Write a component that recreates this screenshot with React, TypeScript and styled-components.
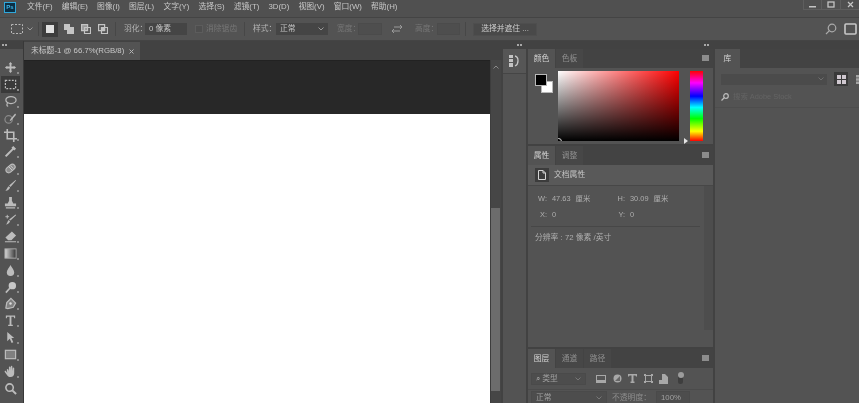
import React from "react";
import styled, { createGlobalStyle } from "styled-components";

const GlobalStyle = createGlobalStyle`
  html, body { margin: 0; padding: 0; background: #535353; }
  body { font-family: "Liberation Sans", "Noto Sans CJK SC", sans-serif; }
  * { box-sizing: border-box; }
`;

const Shell = styled.div`
  width: 859px;
  height: 403px;
  overflow: hidden;
  display: flex;
  flex-direction: column;
  background: #535353;
  color: #c4c4c4;
  font-size: 8px;
  line-height: 1;
  filter: blur(0.4px);
  white-space: nowrap;
`;

/* top menu */
const MenuBar = styled.div`
  height: 18px;
  flex: none;
  display: flex;
  background: #505050;
  border-bottom: 1px solid #444;
`;
const Logo = styled.div`
  width: 12px;
  height: 11px;
  margin: 2px 0 0 4px;
  background: #0c2f44;
  border: 1px solid #2fa8dc;
  color: #3fb6e8;
  font-size: 6px;
  font-weight: 700;
  text-align: center;
  line-height: 9px;
`;
const MenuList = styled.div`
  display: flex;
  gap: 9.2px;
  margin-left: 11px;
  padding-top: 3px;
`;
const MenuItem = styled.span`
  color: #c8c8c8;
  font-size: 7.8px;
`;
const WinControls = styled.div`
  margin-left: auto;
  display: flex;
  height: 10px;
  border-left: 1px solid #5e5e5e;
  border-bottom: 1px solid #5e5e5e;
`;
const WinBtn = styled.div<{ $w: number }>`
  width: ${(p) => p.$w}px;
  display: flex;
  align-items: center;
  justify-content: center;
  border-right: 1px solid #5e5e5e;
  &:last-child { border-right: 0; }
`;

/* options bar */
const OptionsBar = styled.div`
  height: 23px;
  flex: none;
  display: flex;
  align-items: center;
  background: #535353;
  border-bottom: 1px solid #444;
`;
const OptSep = styled.div<{ $l: number; $r: number }>`
  width: 1px;
  height: 14px;
  background: #474747;
  margin: 0 ${(p) => p.$r}px 0 ${(p) => p.$l}px;
  flex: none;
`;
const OptIcon = styled.div<{ $w?: number; $ml?: number; $active?: boolean }>`
  width: ${(p) => p.$w ?? 17}px;
  height: 15px;
  flex: none;
  margin-left: ${(p) => p.$ml ?? 0}px;
  display: flex;
  align-items: center;
  justify-content: center;
  background: ${(p) => (p.$active ? "#3c3c3c" : "transparent")};
`;
const OptLabel = styled.span<{ $dim?: boolean; $w: number; $ml?: number }>`
  width: ${(p) => p.$w}px;
  flex: none;
  margin-left: ${(p) => p.$ml ?? 0}px;
  font-size: 7.8px;
  color: ${(p) => (p.$dim ? "#767676" : "#b4b4b4")};
`;
const OptInput = styled.div<{ $w: number; $dim?: boolean }>`
  width: ${(p) => p.$w}px;
  height: 12px;
  flex: none;
  display: flex;
  align-items: center;
  justify-content: space-between;
  padding: 0 3px;
  font-size: 7.8px;
  color: #c4c4c4;
  background: ${(p) => (p.$dim ? "#4e4e4e" : "#454545")};
  border: 1px solid ${(p) => (p.$dim ? "#4b4b4b" : "#454545")};
`;
const CheckBox = styled.div`
  width: 8px;
  height: 8px;
  flex: none;
  margin: 0 3px 0 8px;
  border: 1px solid #5c5c5c;
  background: #4e4e4e;
`;
const OptButton = styled.div`
  width: 64px;
  height: 13px;
  flex: none;
  margin-left: 7px;
  display: flex;
  align-items: center;
  justify-content: center;
  background: #494949;
  color: #cfcfcf;
  font-size: 7.8px;
  border: 1px solid #4e4e4e;
`;
const OptRight = styled.div`
  margin-left: auto;
  display: flex;
  align-items: center;
  gap: 7px;
  padding-right: 2px;
`;

/* workspace */
const Workspace = styled.div`
  flex: 1;
  display: flex;
  min-height: 0;
  background: #424242;
`;
const ToolPanel = styled.div`
  width: 24px;
  flex: none;
  display: flex;
  flex-direction: column;
  background: #535353;
  border-right: 1px solid #383838;
`;
const Handle = styled.div<{ $pr?: number; $pl?: number }>`
  height: 8px;
  flex: none;
  background: #424242;
  display: flex;
  align-items: center;
  gap: 1px;
  justify-content: ${(p) => (p.$pl !== undefined ? "flex-start" : "flex-end")};
  padding: 0 ${(p) => p.$pr ?? 0}px 0 ${(p) => p.$pl ?? 0}px;
  &::before,
  &::after {
    content: "";
    width: 2px;
    height: 2px;
    background: #a8a8a8;
  }
`;
const LibHandle = styled.div`
  height: 8px;
  flex: none;
  background: #424242;
`;
const ToolList = styled.div`
  padding-top: 10px;
  display: flex;
  flex-direction: column;
`;
const ToolBtn = styled.div<{ $active?: boolean }>`
  height: 16.9px;
  margin: 0 3px 0 1px;
  display: flex;
  align-items: center;
  justify-content: center;
  position: relative;
  background: ${(p) => (p.$active ? "#3a3a3a" : "transparent")};
`;
const Corner = styled.i`
  position: absolute;
  right: 1px;
  bottom: 2px;
  width: 2px;
  height: 2px;
  background: #8c8c8c;
`;

const DocArea = styled.div`
  width: 478px;
  flex: none;
  display: flex;
  flex-direction: column;
`;
const DocTabs = styled.div`
  height: 19px;
  flex: none;
  display: flex;
  align-items: flex-end;
  background: #424242;
`;
const DocTab = styled.div`
  width: 116px;
  height: 18px;
  display: flex;
  align-items: center;
  justify-content: space-between;
  padding: 0 6px 0 7px;
  background: #535353;
  font-size: 7.8px;
  color: #c8c8c8;
`;
const DocBody = styled.div`
  flex: 1;
  display: flex;
  min-height: 0;
`;
const Canvas = styled.div`
  width: 466px;
  flex: none;
  display: flex;
  flex-direction: column;
  background: #282828;
`;
const Pasteboard = styled.div`
  height: 54px;
  flex: none;
  border-top: 1px solid #222;
`;
const Paper = styled.div`
  flex: 1;
  background: #fff;
`;
const DocScroll = styled.div`
  width: 11px;
  flex: none;
  display: flex;
  flex-direction: column;
  background: #464646;
  border-left: 1px solid #3d3d3d;
  padding-right: 1px;
`;
const ScrollArrow = styled.div`
  height: 14px;
  display: flex;
  align-items: center;
  justify-content: center;
`;
const ScrollThumb = styled.div`
  height: 183px;
  margin-top: 134px;
  background: #6c6c6c;
`;

const DockStrip = styled.div`
  width: 23px;
  flex: none;
  margin-left: 1px;
  display: flex;
  flex-direction: column;
  background: #535353;
`;
const DockIcon = styled.div`
  height: 25px;
  display: flex;
  align-items: center;
  justify-content: center;
  border-bottom: 1px solid #454545;
  background: #565656;
`;

const PanelColumn = styled.div<{ $w: number }>`
  width: ${(p) => p.$w}px;
  flex: none;
  margin-left: 2px;
  display: flex;
  flex-direction: column;
`;
const Panel = styled.div<{ $h?: number; $grow?: boolean }>`
  ${(p) => (p.$h ? `height: ${p.$h}px; flex: none; margin-bottom: 2px;` : "")}
  ${(p) => (p.$grow ? "flex: 1; min-height: 0;" : "")}
  display: flex;
  flex-direction: column;
  background: #535353;
`;
const TabBar = styled.div`
  height: 19px;
  flex: none;
  display: flex;
  align-items: stretch;
  background: #434343;
  position: relative;
`;
const Tab = styled.div<{ $active?: boolean; $w?: number }>`
  width: ${(p) => p.$w ?? 27}px;
  margin-right: 1px;
  display: flex;
  align-items: center;
  justify-content: center;
  font-size: 7.8px;
  color: ${(p) => (p.$active ? "#d4d4d4" : "#8f8f8f")};
  background: ${(p) => (p.$active ? "#535353" : "#474747")};
`;
const PanelMenu = styled.div`
  position: absolute;
  right: 4px;
  top: 6px;
  width: 7px;
  height: 6px;
  background: #8c8c8c;
`;

const ColorBody = styled.div`
  flex: 1;
  display: flex;
  padding: 3px 10px 3px 7px;
`;
const Swatches = styled.div`
  width: 23px;
  height: 24px;
  flex: none;
  position: relative;
  margin-top: 3px;
`;
const Swatch = styled.div<{ $fill: string; $x: number; $y: number }>`
  position: absolute;
  left: ${(p) => p.$x}px;
  top: ${(p) => p.$y}px;
  width: 12px;
  height: 12px;
  background: ${(p) => p.$fill};
  border: 1px solid #b8b8b8;
`;
const Picker = styled.div`
  width: 121px;
  flex: none;
  position: relative;
  overflow: hidden;
  background: linear-gradient(to top, #000, rgba(0, 0, 0, 0)),
    linear-gradient(to right, #fff, #f00);
`;
const PickerDot = styled.div`
  position: absolute;
  left: -3px;
  bottom: -4px;
  width: 7px;
  height: 7px;
  border: 1px solid #ddd;
  border-radius: 50%;
`;
const HueWrap = styled.div`
  margin-left: 11px;
  width: 13px;
  flex: none;
  position: relative;
  background: linear-gradient(
    to bottom,
    #f00 0%,
    #f0f 17%,
    #00f 36%,
    #0ff 52%,
    #0f0 68%,
    #ff0 86%,
    #f00 100%
  );
`;
const HueMark = styled.div`
  position: absolute;
  left: -6px;
  bottom: -3px;
  border-left: 4px solid #e4e4e4;
  border-top: 3px solid transparent;
  border-bottom: 3px solid transparent;
`;

const PropHeader = styled.div`
  height: 21px;
  flex: none;
  display: flex;
  align-items: center;
  gap: 5px;
  padding-left: 7px;
  background: #595959;
  border-bottom: 1px solid #474747;
  font-size: 7.8px;
  color: #c4c4c4;
`;
const DocIconBox = styled.div`
  width: 14px;
  height: 14px;
  display: flex;
  align-items: center;
  justify-content: center;
  background: #3c3c3c;
`;
const PropBody = styled.div`
  flex: 1;
  display: flex;
  min-height: 0;
`;
const PropContent = styled.div`
  flex: 1;
  display: flex;
  flex-direction: column;
  padding: 9px 4px 0 3px;
  color: #aeaeae;
  font-size: 7.4px;
`;
const PropGrid = styled.div`
  display: grid;
  grid-template-columns: 78px 1fr;
  row-gap: 9px;
  padding: 0 0 8px 6px;
  border-bottom: 1px solid #474747;
`;
const PropValue = styled.div`
  display: flex;
  gap: 5px;
  height: 7px;
  align-items: center;
`;
const PropKey = styled.span`
  width: 10px;
  text-align: right;
`;
const Resolution = styled.div`
  padding: 7px 0 0 4px;
  font-size: 7.8px;
`;
const PropScroll = styled.div`
  width: 9px;
  flex: none;
  margin-bottom: 17px;
  background: #4d4d4d;
`;

const LayerRow = styled.div`
  display: flex;
  align-items: center;
  padding-left: 3px;
  font-size: 7.8px;
  color: #8c8c8c;
`;
const FilterRow = styled(LayerRow)`
  height: 22px;
  flex: none;
  border-bottom: 1px solid #4b4b4b;
  gap: 7px;
`;
const Field = styled.div<{ $w: number; $h?: number }>`
  width: ${(p) => p.$w}px;
  height: ${(p) => p.$h ?? 12}px;
  flex: none;
  display: flex;
  align-items: center;
  gap: 3px;
  padding: 0 4px;
  background: #4d4d4d;
  border: 1px solid #4a4a4a;
  color: #a0a0a0;
  justify-content: space-between;
`;
const LayerIcons = styled.div`
  display: flex;
  align-items: center;
  gap: 6.5px;
  margin-left: 3px;
`;
const Toggle = styled.div`
  width: 5px;
  height: 10px;
  margin-left: 3px;
  border-radius: 3px;
  background: #3e3e3e;
  position: relative;
  &::before {
    content: "";
    position: absolute;
    top: -2px;
    left: 0;
    width: 6px;
    height: 6px;
    border-radius: 50%;
    background: #9c9c9c;
  }
`;
const BlendRow = styled(LayerRow)`
  height: 15px;
  flex: none;
  gap: 5px;
`;

const LibBody = styled.div`
  display: flex;
  align-items: center;
  padding: 4px 0 0 6px;
`;
const LibSelect = styled.div`
  width: 106px;
  height: 11px;
  background: #4b4b4b;
  display: flex;
  align-items: center;
  justify-content: flex-end;
  padding-right: 3px;
  flex: none;
`;
const GridBtn = styled.div<{ $dark?: boolean; $ml: number }>`
  width: 14px;
  height: 14px;
  flex: none;
  margin-left: ${(p) => p.$ml}px;
  display: flex;
  align-items: center;
  justify-content: center;
  background: ${(p) => (p.$dark ? "#3a3a3a" : "transparent")};
`;
const LibSearch = styled.div`
  display: flex;
  align-items: center;
  gap: 4px;
  height: 21px;
  margin-top: 1px;
  padding-left: 6px;
  color: #646464;
  font-size: 7.4px;
  border-bottom: 1px solid #4d4d4d;
`;

const Svg = ({ s = 14, children }: { s?: number; children: React.ReactNode }) => (
  <svg width={s} height={s} viewBox="0 0 14 14" fill="none" stroke="#bcbcbc" strokeWidth="1.300">
    {children}
  </svg>
);

const Chevron = ({ c = "#9a9a9a" }: { c?: string }) => (
  <svg width="6" height="4" viewBox="0 0 6 4" fill="none" stroke={c}>
    <path d="M.5.5 3 3 5.500.5" />
  </svg>
);

const solid = { fill: "#bcbcbc", stroke: "none" };

const tools: React.ReactNode[] = [
  <path {...solid} d="M7 1 9 3.500H8V6h2.500V5L13 7l-2.500 2V8H8v2.500h1L7 13l-2-2.500h1V8H3.500v1L1 7l2.500-2v1H6V3.500H5z" />,
  <rect x="1.500" y="2.500" width="11" height="9" strokeDasharray="2 1.500" />,
  <>
    <ellipse cx="7.500" cy="5.500" rx="5.500" ry="3.800" />
    <path d="M4 9c-1.500 1-1 3 .5 3" />
  </>,
  <>
    <circle cx="5" cy="8" r="4" stroke="#8a8a8a" />
    <path {...solid} d="M12 1.500 13 3 8 9 6 10l1-2.500z" />
  </>,
  <path d="M3.500 0v10.500H14M0 3.500h10.500V14" strokeWidth="1.700" />,
  <path {...solid} d="M10 1l3 3-2 2-.800-.800L5 10.500 2.500 13 1 11.500 3.500 9l5.300-5.200L8 3z" />,
  <>
    <rect x="1.500" y="4" width="11" height="6" rx="3" transform="rotate(-40 7 7)" fill="#8c8c8c" />
    <path d="M5 5l4 4M7 4l3 3" stroke="#ddd" strokeWidth=".8" />
  </>,
  <path {...solid} d="M12.500 1 13 1.500 7 8.500 5.500 7zM5 7.800 6.500 9.200C6 11.500 3.500 12.800 1.500 12.500 3 11.500 3.500 9 5 7.800z" />,
  <path {...solid} d="M5.500 1h3v4L10 8h3v3H1V8h3l1.500-3zM2 12h10v1.500H2z" />,
  <>
    <path {...solid} d="M12.500 1.500 13 2.500 7 8 5.500 7zM5 7.500 6.500 9c-.500 2-2.500 3.500-4.500 3.500C3.500 11.500 3.500 9 5 7.500z" />
    <path d="M1.500 4h4M3.500 2v4" strokeWidth="1" />
  </>,
  <path {...solid} d="M8.500 1.500 13 6l-5 5H4.500L1.500 8zM1 12.200h12v1H1z" />,
  <>
    <defs>
      <linearGradient id="grad" x1="0" x2="1" y1="0" y2="0">
        <stop offset="0" stopColor="#d8d8d8" />
        <stop offset="1" stopColor="#333" />
      </linearGradient>
    </defs>
    <rect x="1" y="2" width="12" height="10" fill="url(#grad)" stroke="#aaa" strokeWidth="1" />
  </>,
  <path {...solid} d="M7 1c1 2.500 4 5 4 8a4 4 0 0 1-8 0c0-3 3-5.500 4-8z" />,
  <>
    <circle cx="9" cy="5" r="4" fill="#c8c8c8" stroke="none" />
    <path d="M6.500 7.500 2 12.500" strokeWidth="1.800" />
  </>,
  <>
    <path d="M7.500 1.500 12.500 6.500 10 11 4 12.500 2 12l1-6z" fill="#808080" stroke="#bcbcbc" />
    <circle cx="7" cy="7" r="1.300" fill="#ddd" stroke="none" />
  </>,
  <path {...solid} d="M2 1.500h10v3h-1l-.500-1.500H8v8.500h1.500v1.300h-5V11.500H6V3H3.500L3 4.500H2z" />,
  <path {...solid} d="M3.500 1 11 7.500H8l2 4.500-1.800.800-2-4.500L3.500 11z" />,
  <rect x="1.500" y="2.500" width="11" height="9" fill="#808080" stroke="#bcbcbc" />,
  <path {...solid} d="M3 5c0-1 1.500-1 1.800 0l.500 2V2.500c0-1.200 1.500-1.200 1.700 0V6l.300-4.200c0-1.200 1.700-1.100 1.700 0V6.500l.500-3.200c.200-1 1.500-.800 1.500.200V9c0 2.500-1.500 4-4 4-2 0-3-.800-4-2.500L.800 7.500c-.500-1 .800-1.800 1.500-.800L3.500 8.500z" />,
  <>
    <circle cx="6" cy="6" r="4" strokeWidth="1.700" />
    <path d="M9 9l4 4" strokeWidth="2.200" />
  </>,
];

const menus = ["文件(F)", "编辑(E)", "图像(I)", "图层(L)", "文字(Y)", "选择(S)", "滤镜(T)", "3D(D)", "视图(V)", "窗口(W)", "帮助(H)"];

const App: React.FC = () => {
  return (
    <Shell>
      <GlobalStyle />
      <MenuBar>
        <Logo>Ps</Logo>
        <MenuList>
          {menus.map((m) => (
            <MenuItem key={m}>{m}</MenuItem>
          ))}
        </MenuList>
        <WinControls>
          <WinBtn $w={18}>
            <svg width="7" height="7" viewBox="0 0 7 7">
              <path d="M0 5h7v1.500H0z" fill="#c4c4c4" />
            </svg>
          </WinBtn>
          <WinBtn $w={19}>
            <svg width="8" height="7" viewBox="0 0 8 7" fill="none" stroke="#c4c4c4" strokeWidth="1.300">
              <rect x="1" y="1" width="6" height="5" />
            </svg>
          </WinBtn>
          <WinBtn $w={18}>
            <svg width="7" height="7" viewBox="0 0 7 7" stroke="#c4c4c4" strokeWidth="1.200">
              <path d="M1 1l5 5M6 1 1 6" />
            </svg>
          </WinBtn>
        </WinControls>
      </MenuBar>

      <OptionsBar>
        <OptIcon $w={20} $ml={7}>
          <svg width="12" height="10" viewBox="0 0 12 10" fill="none" stroke="#b8b8b8">
            <rect x=".5" y=".5" width="11" height="9" strokeDasharray="2 1.500" />
          </svg>
        </OptIcon>
        <Chevron />
        <OptSep $l={5} $r={3} />
        <OptIcon $w={16} $active>
          <svg width="8" height="8" viewBox="0 0 8 8">
            <rect width="8" height="8" fill="#e0e0e0" />
          </svg>
        </OptIcon>
        <OptIcon $ml={2}>
          <svg width="10" height="10" viewBox="0 0 10 10" fill="#c4c4c4">
            <path d="M0 0h6v3h4v7H3V6H0z" />
          </svg>
        </OptIcon>
        <OptIcon>
          <svg width="10" height="10" viewBox="0 0 10 10" fill="none" stroke="#c4c4c4" strokeWidth="1.200">
            <path d="M.6.6h6v6h-6z" fill="#999" />
            <path d="M3.500 3.500h6v6h-6z" />
          </svg>
        </OptIcon>
        <OptIcon>
          <svg width="10" height="10" viewBox="0 0 10 10" fill="none" stroke="#c4c4c4" strokeWidth="1.200">
            <path d="M.6.6h6v6h-6zM3.500 3.500h6v6h-6z" />
            <path d="M3.500 3.500h3v3h-3z" fill="#c4c4c4" />
          </svg>
        </OptIcon>
        <OptSep $l={4} $r={8} />
        <OptLabel $w={21}>羽化：</OptLabel>
        <OptInput $w={42}>0 像素</OptInput>
        <CheckBox />
        <OptLabel $w={30} $dim>
          消除锯齿
        </OptLabel>
        <OptSep $l={8} $r={8} />
        <OptLabel $w={23}>样式：</OptLabel>
        <OptInput $w={52}>
          正常
          <Chevron />
        </OptInput>
        <OptLabel $w={21} $ml={9} $dim>
          宽度：
        </OptLabel>
        <OptInput $w={24} $dim />
        <OptIcon $w={14} $ml={8}>
          <svg width="10" height="10" viewBox="0 0 10 10" fill="none" stroke="#9a9a9a">
            <path d="M0 7h8M2 5 0 7l2 2M2 3h8M8 1l2 2-2 2" />
          </svg>
        </OptIcon>
        <OptLabel $w={22} $ml={11} $dim>
          高度：
        </OptLabel>
        <OptInput $w={23} $dim />
        <OptSep $l={5} $r={0} />
        <OptButton>选择并遮住 ...</OptButton>
        <OptRight>
          <svg width="12" height="12" viewBox="0 0 12 12" fill="none" stroke="#aaa" strokeWidth="1.200">
            <circle cx="7" cy="5" r="3.800" />
            <path d="M4.200 7.800 1 11" />
          </svg>
          <svg width="13" height="12" viewBox="0 0 13 12" fill="none" stroke="#c8c8c8" strokeWidth="1.600">
            <rect x="1" y="1" width="11" height="10" rx="1" />
          </svg>
        </OptRight>
      </OptionsBar>

      <Workspace>
        <ToolPanel>
          <Handle $pl={2} />
          <ToolList>
            {tools.map((t, i) => (
              <ToolBtn key={i} $active={i === 1}>
                <Svg s={13}>{t}</Svg>
                {i < 19 && <Corner />}
              </ToolBtn>
            ))}
          </ToolList>
        </ToolPanel>

        <DocArea>
          <DocTabs>
            <DocTab>
              未标题-1 @ 66.7%(RGB/8)
              <svg width="5" height="5" viewBox="0 0 5 5" stroke="#b4b4b4">
                <path d="M.5.5l4 4M4.500.5l-4 4" />
              </svg>
            </DocTab>
          </DocTabs>
          <DocBody>
            <Canvas>
              <Pasteboard />
              <Paper />
            </Canvas>
            <DocScroll>
              <ScrollArrow>
                <svg width="6" height="4" viewBox="0 0 6 4" fill="none" stroke="#8a8a8a">
                  <path d="M.5 3.500 3 1l2.500 2.500" />
                </svg>
              </ScrollArrow>
              <ScrollThumb />
            </DocScroll>
          </DocBody>
        </DocArea>

        <DockStrip>
          <Handle $pr={4} />
          <DockIcon>
            <svg width="11" height="13" viewBox="0 0 11 13" fill="#c4c4c4">
              <path d="M0 0h4v3H0zM0 4h4v3H0zM0 8h4v4H0z" />
              <path d="M6 1c4 1 4 8 0 10" fill="none" stroke="#c4c4c4" strokeWidth="1.300" />
            </svg>
          </DockIcon>
        </DockStrip>

        <PanelColumn $w={185}>
          <Handle $pr={4} />
          <Panel $h={95}>
            <TabBar>
              <Tab $active>颜色</Tab>
              <Tab>色板</Tab>
              <PanelMenu />
            </TabBar>
            <ColorBody>
              <Swatches>
                <Swatch $fill="#fff" $x={6} $y={7} />
                <Swatch $fill="#000" $x={0} $y={0} />
              </Swatches>
              <Picker>
                <PickerDot />
              </Picker>
              <HueWrap>
                <HueMark />
              </HueWrap>
            </ColorBody>
          </Panel>
          <Panel $h={201}>
            <TabBar>
              <Tab $active>属性</Tab>
              <Tab>调整</Tab>
              <PanelMenu />
            </TabBar>
            <PropHeader>
              <DocIconBox>
                <svg width="8" height="10" viewBox="0 0 8 10" fill="none" stroke="#d4d4d4">
                  <path d="M.5.5h4.500L7.500 3v6.500h-7zM5 .5V3h2.500" />
                </svg>
              </DocIconBox>
              文档属性
            </PropHeader>
            <PropBody>
              <PropContent>
                <PropGrid>
                  <PropValue>
                    <PropKey>W:</PropKey> 47.63 <span>厘米</span>
                  </PropValue>
                  <PropValue>
                    <PropKey>H:</PropKey> 30.09 <span>厘米</span>
                  </PropValue>
                  <PropValue>
                    <PropKey>X:</PropKey> 0
                  </PropValue>
                  <PropValue>
                    <PropKey>Y:</PropKey> 0
                  </PropValue>
                </PropGrid>
                <Resolution>分辨率 : 72 像素 /英寸</Resolution>
              </PropContent>
              <PropScroll />
            </PropBody>
          </Panel>
          <Panel $grow>
            <TabBar>
              <Tab $active>图层</Tab>
              <Tab>通道</Tab>
              <Tab>路径</Tab>
              <PanelMenu />
            </TabBar>
            <FilterRow>
              <Field $w={55}>
                <span>⌕ 类型</span>
                <Chevron c="#777" />
              </Field>
              <LayerIcons>
                <svg width="10" height="8" viewBox="0 0 10 8" fill="#a8a8a8">
                  <path d="M0 0h10v8H0z" />
                  <path d="M1 1h8v4H1z" fill="#555" />
                </svg>
                <svg width="9" height="9" viewBox="0 0 9 9">
                  <circle cx="4.500" cy="4.500" r="4" fill="#a8a8a8" />
                  <path d="M7 2 2 7h5z" fill="#666" />
                </svg>
                <svg width="9" height="9" viewBox="0 0 9 9" fill="#a8a8a8">
                  <path d="M0 0h9v2.500H8L7.500 1.500H5.500V7.500H6.500V9h-4V7.500h1V1.500H1.500L1 2.500H0z" />
                </svg>
                <svg width="9" height="9" viewBox="0 0 9 9" fill="none" stroke="#a8a8a8">
                  <path d="M1.500 1.500h6v6h-6z" />
                  <path d="M0 0h2v2H0zM7 0h2v2H7zM0 7h2v2H0zM7 7h2v2H7z" fill="#a8a8a8" stroke="none" />
                </svg>
                <svg width="9" height="10" viewBox="0 0 9 10" fill="#a8a8a8">
                  <path d="M3 0h3l3 3v7H3zM0 6h3v4H0z" />
                </svg>
                <Toggle />
              </LayerIcons>
            </FilterRow>
            <BlendRow>
              <Field $w={76} $h={13}>
                正常
                <Chevron c="#777" />
              </Field>
              <span>不透明度：</span>
              <Field $w={34} $h={13}>
                100%
                <Chevron c="#777" />
              </Field>
            </BlendRow>
          </Panel>
        </PanelColumn>

        <PanelColumn $w={144}>
          <LibHandle />
          <Panel $grow>
            <TabBar>
              <Tab $active $w={25}>
                库
              </Tab>
            </TabBar>
            <LibBody>
              <LibSelect>
                <Chevron c="#6e6e6e" />
              </LibSelect>
              <GridBtn $dark $ml={7}>
                <svg width="9" height="9" viewBox="0 0 9 9" fill="#d0c8d0">
                  <path d="M0 0h4v4H0zM5 0h4v4H5zM0 5h4v4H0zM5 5h4v4H5z" />
                </svg>
              </GridBtn>
              <GridBtn $ml={5}>
                <svg width="9" height="9" viewBox="0 0 9 9" fill="#a4a4a4">
                  <path d="M0 0h9v2.500H0zM0 3.200h9v2.500H0zM0 6.500h9V9H0z" />
                </svg>
              </GridBtn>
            </LibBody>
            <LibSearch>
              <svg width="8" height="8" viewBox="0 0 8 8" fill="none" stroke="#bdbdbd" strokeWidth="1.200">
                <circle cx="5" cy="3" r="2.300" />
                <path d="M3 5 .5 7.500" />
              </svg>
              搜索 Adobe Stock
            </LibSearch>
          </Panel>
        </PanelColumn>
      </Workspace>
    </Shell>
  );
};

export default App;
